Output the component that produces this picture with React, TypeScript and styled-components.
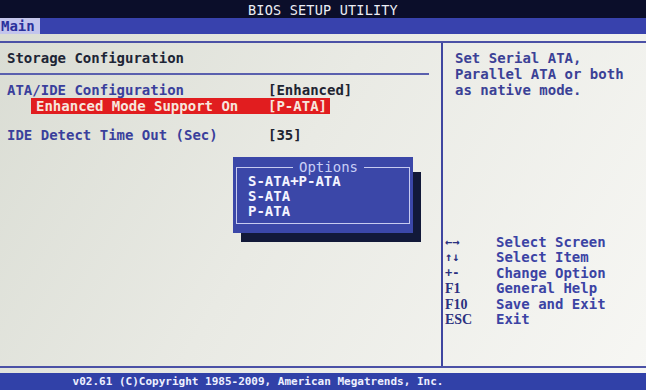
import React from "react";
import styled, { createGlobalStyle } from "styled-components";

const GlobalStyle = createGlobalStyle`
  html, body {
    margin: 0;
    padding: 0;
    background: #ffffff;
  }
  body {
    font-family: "DejaVu Sans Mono", "Liberation Mono", monospace;
  }
`;

const Screen = styled.div`
  position: relative;
  isolation: isolate;
  width: 646px;
  height: 390px;
  display: flex;
  flex-direction: column;
  overflow: hidden;
  background: linear-gradient(120deg, #d9dcd3 0%, #e9eae4 45%, #f7f7f4 100%);
`;

const TitleBar = styled.div`
  height: 18px;
  background: #0b0e2a;
  color: #ecedf5;
  font-size: 13.5px;
  line-height: 20px;
  text-align: center;
  letter-spacing: 0.2px;
`;

const MenuBar = styled.div`
  height: 16px;
  background: #3842ad;
  display: flex;
`;

const MenuTab = styled.div<{ active?: boolean }>`
  width: 40px;
  height: 16px;
  background: ${({ active }) => (active ? "#c3c5ec" : "transparent")};
  color: ${({ active }) => (active ? "#2a309c" : "#e8e8f8")};
  font-size: 14px;
  font-weight: bold;
  line-height: 16px;
  padding-left: 1px;
  box-sizing: border-box;
`;

const Body = styled.div`
  margin-top: 7px;
  height: 323px;
  border-top: 2px solid #4b51a6;
  border-bottom: 2px solid #4b51a6;
  display: grid;
  grid-template-columns: 443px 1fr;
`;

const LeftPanel = styled.div`
  border-right: 2px solid #3f46a0;
`;

const SectionTitle = styled.div`
  height: 30px;
  line-height: 30px;
  padding-left: 7px;
  margin-right: 12px;
  border-bottom: 2px solid #5a60ae;
  color: #1d2535;
  font-size: 14px;
  font-weight: bold;
`;

const Rows = styled.div`
  padding-top: 7px;
`;

const Row = styled.div<{ selected?: boolean; gap?: number }>`
  display: grid;
  grid-template-columns: ${({ selected }) => (selected ? "232px" : "261px")} 1fr;
  height: 16px;
  line-height: 16px;
  margin-top: ${({ gap }) => gap ?? 0}px;
  margin-left: ${({ selected }) => (selected ? "31px" : "0")};
  width: ${({ selected }) => (selected ? "299px" : "auto")};
  padding-left: ${({ selected }) => (selected ? "5px" : "7px")};
  box-sizing: border-box;
  background: ${({ selected }) => (selected ? "#e11d1f" : "transparent")};
  font-size: 14px;
  font-weight: bold;
  white-space: nowrap;
`;

const Label = styled.span<{ selected?: boolean }>`
  color: ${({ selected }) => (selected ? "#f7e6dd" : "#3a3f9c")};
`;

const Value = styled.span<{ selected?: boolean }>`
  color: ${({ selected }) => (selected ? "#f7e6dd" : "#1e2431")};
`;

const RightPanel = styled.div`
  display: flex;
  flex-direction: column;
`;

const Help = styled.div`
  padding: 7px 0 0 12px;
  color: #3b4196;
  font-size: 14px;
  font-weight: bold;
  line-height: 16px;
  white-space: pre;
`;

const Keys = styled.div`
  margin-top: 137px;
  display: grid;
  grid-template-columns: 51px 1fr;
  grid-auto-rows: 15.4px;
  line-height: 15.4px;
  padding-left: 2px;
`;

const Key = styled.span<{ arrow?: boolean }>`
  color: #2b3180;
  font-family: ${({ arrow }) =>
    arrow ? `"DejaVu Sans Mono", monospace` : `"Liberation Serif", "DejaVu Serif", serif`};
  font-size: ${({ arrow }) => (arrow ? "12px" : "14px")};
  font-weight: bold;
`;

const KeyText = styled.span`
  color: #3b43a4;
  font-size: 14px;
  font-weight: bold;
`;

const Footer = styled.div`
  margin-top: 5px;
  height: 17px;
  background: #3141a8;
  color: #eef0ff;
  font-size: 11px;
  font-weight: bold;
  line-height: 18px;
  text-align: center;
  padding-right: 130px;
`;

const Popup = styled.div`
  position: absolute;
  left: 233px;
  top: 157px;
  width: 180px;
  height: 76px;
  box-sizing: border-box;
  padding: 3px 3px 0 3px;
  background: #3b47a8;
  &::after {
    content: "";
    position: absolute;
    z-index: -1;
    left: 8px;
    top: 15px;
    right: -8px;
    bottom: -9px;
    background: #121939;
  }
`;

const PopupFrame = styled.fieldset`
  margin: 0;
  padding: 0 0 0 11px;
  height: 64px;
  box-sizing: border-box;
  border: 1.5px solid #c7cbf0;
  min-width: 0;
`;

const PopupTitle = styled.legend`
  margin: 0 auto;
  padding: 0 6px;
  color: #c9cff6;
  font-size: 14px;
  line-height: 14px;
`;

const PopupItem = styled.div`
  color: #f3f4ff;
  font-size: 14px;
  font-weight: bold;
  line-height: 15px;
`;

const keys: [string, string, boolean][] = [
  ["←→", "Select Screen", true],
  ["↑↓", "Select Item", true],
  ["+-", "Change Option", true],
  ["F1", "General Help", false],
  ["F10", "Save and Exit", false],
  ["ESC", "Exit", false],
];

const App: React.FC = () => {
  return (
    <>
      <GlobalStyle />
      <Screen>
        <TitleBar>BIOS SETUP UTILITY</TitleBar>
        <MenuBar>
          <MenuTab active>Main</MenuTab>
        </MenuBar>
        <Body>
          <LeftPanel>
            <SectionTitle>Storage Configuration</SectionTitle>
            <Rows>
              <Row>
                <Label>ATA/IDE Configuration</Label>
                <Value>[Enhanced]</Value>
              </Row>
              <Row selected>
                <Label selected>Enhanced Mode Support On</Label>
                <Value selected>[P-ATA]</Value>
              </Row>
              <Row gap={13}>
                <Label>IDE Detect Time Out (Sec)</Label>
                <Value>[35]</Value>
              </Row>
            </Rows>
          </LeftPanel>
          <RightPanel>
            <Help>{"Set Serial ATA,\nParallel ATA or both\nas native mode."}</Help>
            <Keys>
              {keys.map(([k, text, arrow]) => (
                <React.Fragment key={text}>
                  <Key arrow={arrow}>{k}</Key>
                  <KeyText>{text}</KeyText>
                </React.Fragment>
              ))}
            </Keys>
          </RightPanel>
        </Body>
        <Footer>v02.61 (C)Copyright 1985-2009, American Megatrends, Inc.</Footer>
        <Popup>
          <PopupFrame>
            <PopupTitle>Options</PopupTitle>
            <PopupItem>S-ATA+P-ATA</PopupItem>
            <PopupItem>S-ATA</PopupItem>
            <PopupItem>P-ATA</PopupItem>
          </PopupFrame>
        </Popup>
      </Screen>
    </>
  );
};

export default App;
